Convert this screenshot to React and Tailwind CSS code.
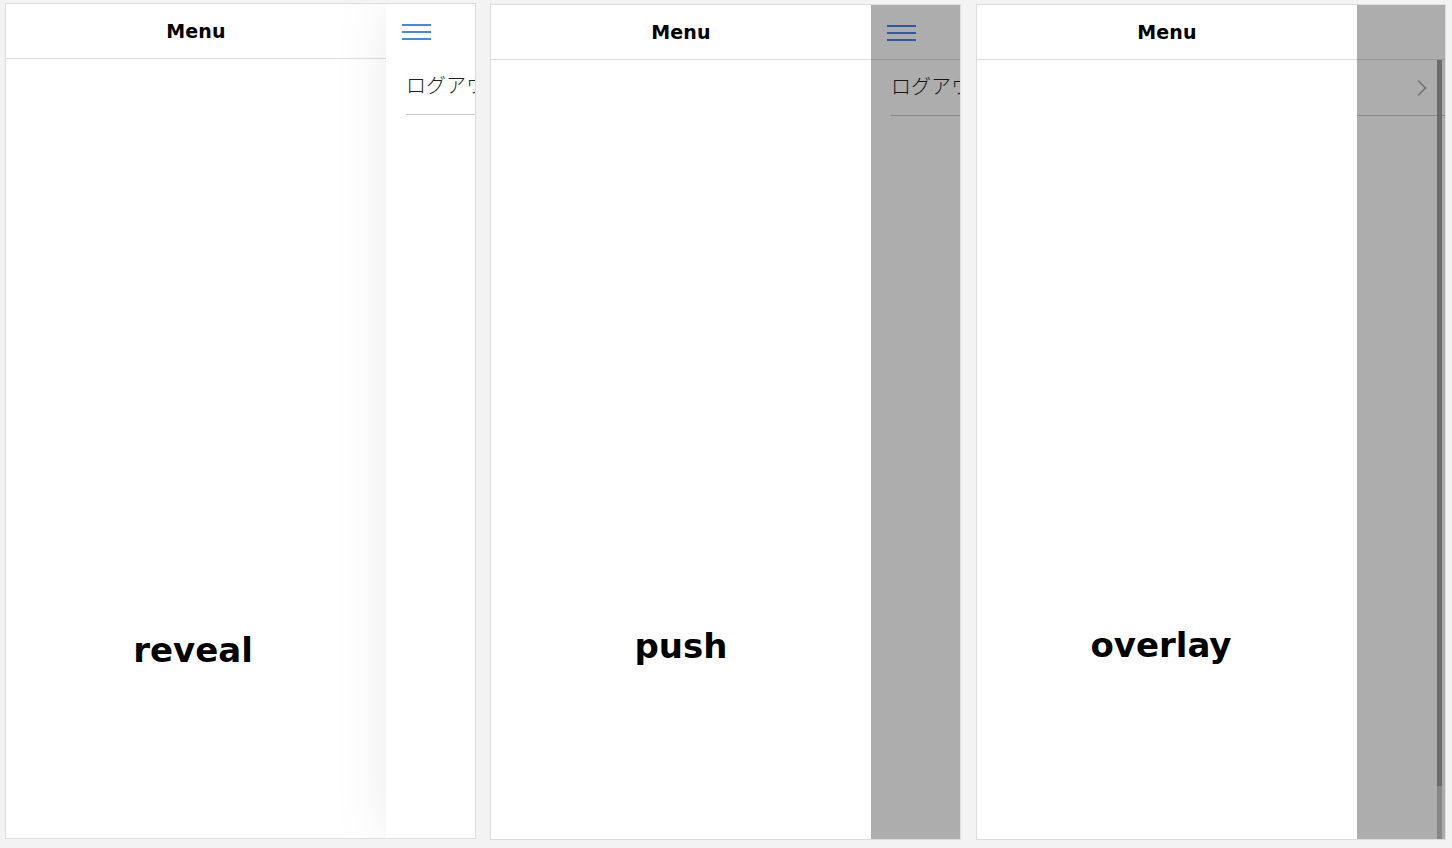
import React from "react";

const font = { fontFamily: '"DejaVu Sans", Verdana, sans-serif' };

function Hamburger() {
  return (
    <div className="flex flex-col gap-[5px] w-[29px] mt-[1px]">
      <div className="h-[2px] bg-[#4285f4]" />
      <div className="h-[2px] bg-[#4285f4]" />
      <div className="h-[2px] bg-[#4285f4]" />
    </div>
  );
}

function Panel({ mode, label, topPad, shift, extra }) {
  return (
    <div className={`relative flex h-[836px] border border-[#dddddd] bg-white overflow-hidden ${mode === "reveal" ? "mt-[3px]" : "mt-[4px]"} ${extra || ""}`}>
      {/* main content */}
      <div className="relative z-0 flex flex-col w-[380px] shrink-0 bg-white">
        <div className="h-[55px] shrink-0 border-b border-[#dddddd] flex items-center justify-center">
          <span className="text-[19px] font-bold text-black tracking-[0.2px]" style={font}>Menu</span>
        </div>
        <div className="flex-1 flex justify-center" style={{ paddingTop: topPad, paddingRight: shift }}>
          <span className="text-[34px] font-bold leading-[40px] text-black h-[40px]" style={font}>{label}</span>
        </div>
      </div>
      {/* drawer */}
      <div
        className={`relative z-10 flex-1 flex flex-col bg-white ${mode === "reveal" ? "shadow-[0_0_60px_rgba(0,0,0,0.08)]" : ""}`}
      >
        {mode !== "overlay" ? (
          <>
            <div className={`h-[55px] shrink-0 flex items-center pl-[16px] ${mode === "push" ? "border-b border-[#dddddd]" : ""}`}>
              <Hamburger />
            </div>
            <div className="ml-[20px] h-[56px] border-b border-[#c8c8c8] flex items-center whitespace-nowrap overflow-hidden">
              <span className="text-[20px] font-light text-[#222] mt-[-3px]" style={{ fontFamily: '"Noto Sans CJK JP", sans-serif' }}>ログアウト</span>
            </div>
          </>
        ) : (
          <>
            <div className="h-[55px] shrink-0 border-b border-[#dddddd]" />
            <div className="h-[56px] border-b border-[#c8c8c8] flex items-center justify-end pr-[17px]">
              <svg width="12" height="18" viewBox="0 0 12 18" fill="none" stroke="#aaaaaa" strokeWidth="1.6">
                <path d="M2 1.5 L9.5 9 L2 16.5" />
              </svg>
            </div>
            <div className="absolute right-[3px] top-[55px] bottom-0 w-[5px] flex flex-col">
              <div className="h-[726px] bg-[#9e9e9e]" />
              <div className="flex-1 bg-[#c6c6c6]" />
            </div>
          </>
        )}
        {mode !== "reveal" && <div className="absolute inset-0 bg-black/[0.32] z-20" />}
      </div>
    </div>
  );
}

export default function App() {
  return (
    <div className="w-[1452px] h-[848px] bg-[#f3f3f3] overflow-hidden">
      <div className="grid grid-cols-[471px_471px_471px] gap-x-[14px] pl-[5px]">
        <Panel mode="reveal" label="reveal" topPad={571} shift={6} />
        <Panel mode="push" label="push" topPad={566} shift={0} />
        <Panel mode="overlay" label="overlay" topPad={565} shift={12} extra="ml-[1px]" />
      </div>
    </div>
  );
}
